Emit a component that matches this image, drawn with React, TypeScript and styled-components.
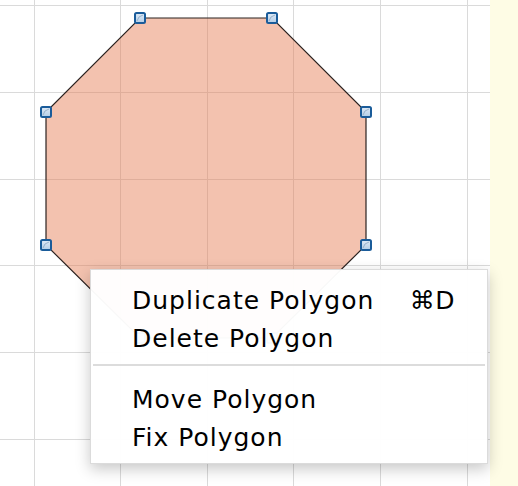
import React, { ReactElement } from 'react'
import styled, { createGlobalStyle } from 'styled-components'

const GlobalStyle = createGlobalStyle`
    html, body {
        margin: 0;
        padding: 0;
        background: #ffffff;
    }
`

const Screen = styled.div`
    display: flex;
    width: 518px;
    height: 486px;
    overflow: hidden;
    font-family: "DejaVu Sans", "Liberation Sans", sans-serif;
`
const Canvas = styled.div`
    position: relative;
    flex: 1;
    background: #ffffff;
`
const Drawing = styled.svg`
    position: absolute;
    left: 0;
    top: 0;
`
const Sidebar = styled.aside`
    width: 28px;
    background-color: #fefce5;
`
const Menu = styled.div`
    position: absolute;
    left: 90px;
    top: 269px;
    width: 398px;
    box-sizing: border-box;
    padding: 12px 0 7px;
    background: rgba(255, 255, 255, 0.97);
    border: 1px solid rgba(0, 0, 0, 0.14);
    box-shadow: 0 5px 14px rgba(0, 0, 0, 0.22);
`
const Item = styled.div`
    display: flex;
    justify-content: space-between;
    padding: 0 32px 0 41px;
    font-size: 25px;
    line-height: 37.5px;
    letter-spacing: 1px;
    color: #000000;
`
const Shortcut = styled.span`
    letter-spacing: 0.5px;
`
const Separator = styled.hr`
    margin: 7px 2px 15px;
    border: none;
    height: 2px;
    background: #dcdcdc;
`

// grid and polygon geometry as drawn in the editor
const gridX = [34, 120, 207, 293, 380, 467]
const gridY = [5, 92, 179, 265, 352, 439]
const vertices: [number, number][] = [
    [140, 18], [272, 18], [366, 112], [366, 245],
    [272, 338], [140, 338], [46, 245], [46, 112],
]

function Handle({ x, y }: { x: number; y: number }): ReactElement {
    return (
        <g>
            <rect x={x - 5} y={y - 5} width={10} height={10} rx={1.5}
                fill="url(#handleFill)" stroke="#1a5c9a" strokeWidth={2} />
            <path d={`M${x - 3} ${y + 3} Q${x - 2} ${y - 2} ${x + 3} ${y - 3}`}
                stroke="#8aa6c0" strokeWidth={0.8} fill="none" />
        </g>
    )
}

export default function App(): ReactElement {
    const points = vertices.map(([x, y]) => `${x},${y}`).join(' ')
    return (
        <Screen>
            <GlobalStyle />
            <Canvas>
                <Drawing width={490} height={486} viewBox="0 0 490 486">
                    <defs>
                        <linearGradient id="handleFill" x1="0" y1="0" x2="0" y2="1">
                            <stop offset="0" stopColor="#dfeaf6" />
                            <stop offset="1" stopColor="#b3cde6" />
                        </linearGradient>
                    </defs>
                    {gridX.map(x => (
                        <line key={'x' + x} x1={x + 0.5} y1={0} x2={x + 0.5} y2={486} stroke="#dadada" strokeWidth={1} />
                    ))}
                    {gridY.map(y => (
                        <line key={'y' + y} x1={0} y1={y + 0.5} x2={490} y2={y + 0.5} stroke="#dadada" strokeWidth={1} />
                    ))}
                    <polygon points={points} fill="rgba(228, 120, 78, 0.45)" stroke="#2b2220" strokeWidth={1.2} />
                    {vertices.map(([x, y]) => <Handle key={`${x}-${y}`} x={x} y={y} />)}
                </Drawing>
                <Menu>
                    <Item>
                        <span>Duplicate Polygon</span>
                        <Shortcut>⌘D</Shortcut>
                    </Item>
                    <Item>Delete Polygon</Item>
                    <Separator />
                    <Item>Move Polygon</Item>
                    <Item>Fix Polygon</Item>
                </Menu>
            </Canvas>
            <Sidebar />
        </Screen>
    )
}
